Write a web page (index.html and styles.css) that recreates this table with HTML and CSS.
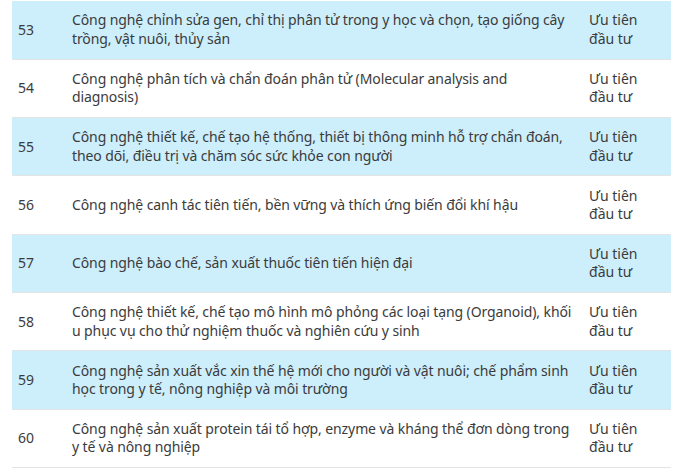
FILE: index.html
```html
<!DOCTYPE html>
<html lang="vi">
<head>
<meta charset="utf-8">
<link rel="stylesheet" href="styles.css">
</head>
<body>
<table class="tech-table">
  <colgroup>
    <col class="c-num">
    <col class="c-name">
    <col class="c-level">
  </colgroup>
  <tbody>
    <tr class="alt"><td class="num">53</td><td class="name">Công nghệ chỉnh sửa gen, chỉ thị phân tử trong y học và chọn, tạo giống cây trồng, vật nuôi, thủy sản</td><td class="level">Ưu tiên đầu tư</td></tr>
    <tr><td class="num">54</td><td class="name">Công nghệ phân tích và chẩn đoán phân tử (Molecular analysis and diagnosis)</td><td class="level">Ưu tiên đầu tư</td></tr>
    <tr class="alt"><td class="num">55</td><td class="name">Công nghệ thiết kế, chế tạo hệ thống, thiết bị thông minh hỗ trợ chẩn đoán, theo dõi, điều trị và chăm sóc sức khỏe con người</td><td class="level">Ưu tiên đầu tư</td></tr>
    <tr><td class="num">56</td><td class="name">Công nghệ canh tác tiên tiến, bền vững và thích ứng biến đổi khí hậu</td><td class="level">Ưu tiên đầu tư</td></tr>
    <tr class="alt"><td class="num">57</td><td class="name">Công nghệ bào chế, sản xuất thuốc tiên tiến hiện đại</td><td class="level">Ưu tiên đầu tư</td></tr>
    <tr><td class="num">58</td><td class="name">Công nghệ thiết kế, chế tạo mô hình mô phỏng các loại tạng (Organoid), khối u phục vụ cho thử nghiệm thuốc và nghiên cứu y sinh</td><td class="level">Ưu tiên đầu tư</td></tr>
    <tr class="alt"><td class="num">59</td><td class="name">Công nghệ sản xuất vắc xin thế hệ mới cho người và vật nuôi; chế phẩm sinh học trong y tế, nông nghiệp và môi trường</td><td class="level">Ưu tiên đầu tư</td></tr>
    <tr><td class="num">60</td><td class="name">Công nghệ sản xuất protein tái tổ hợp, enzyme và kháng thể đơn dòng trong y tế và nông nghiệp</td><td class="level">Ưu tiên đầu tư</td></tr>
  </tbody>
</table>
</body>
</html>
```
FILE: styles.css
```css
html, body {
  margin: 0;
  padding: 0;
  background: #ffffff;
}
body {
  padding: 1px 14px 0 12px;
  font-family: "Noto Sans", "Open Sans", sans-serif;
  font-size: 14px;
  color: #3b3b3b;
}
.tech-table {
  width: 659px;
  border-collapse: collapse;
  table-layout: fixed;
}
.c-num { width: 54px; }
.c-name { width: 517px; }
.c-level { width: 88px; }
.tech-table tr {
  height: 58.33px;
  border-bottom: 1px solid #e4e4e4;
}
.tech-table tr.alt {
  background: #cdeefb;
}
.tech-table td {
  padding: 0 6px;
  vertical-align: middle;
  line-height: 18.5px;
}
.tech-table td.name {
  letter-spacing: -0.1px;
  padding-right: 10px;
}
.tech-table td.level {
  padding-right: 14px;
}
```
